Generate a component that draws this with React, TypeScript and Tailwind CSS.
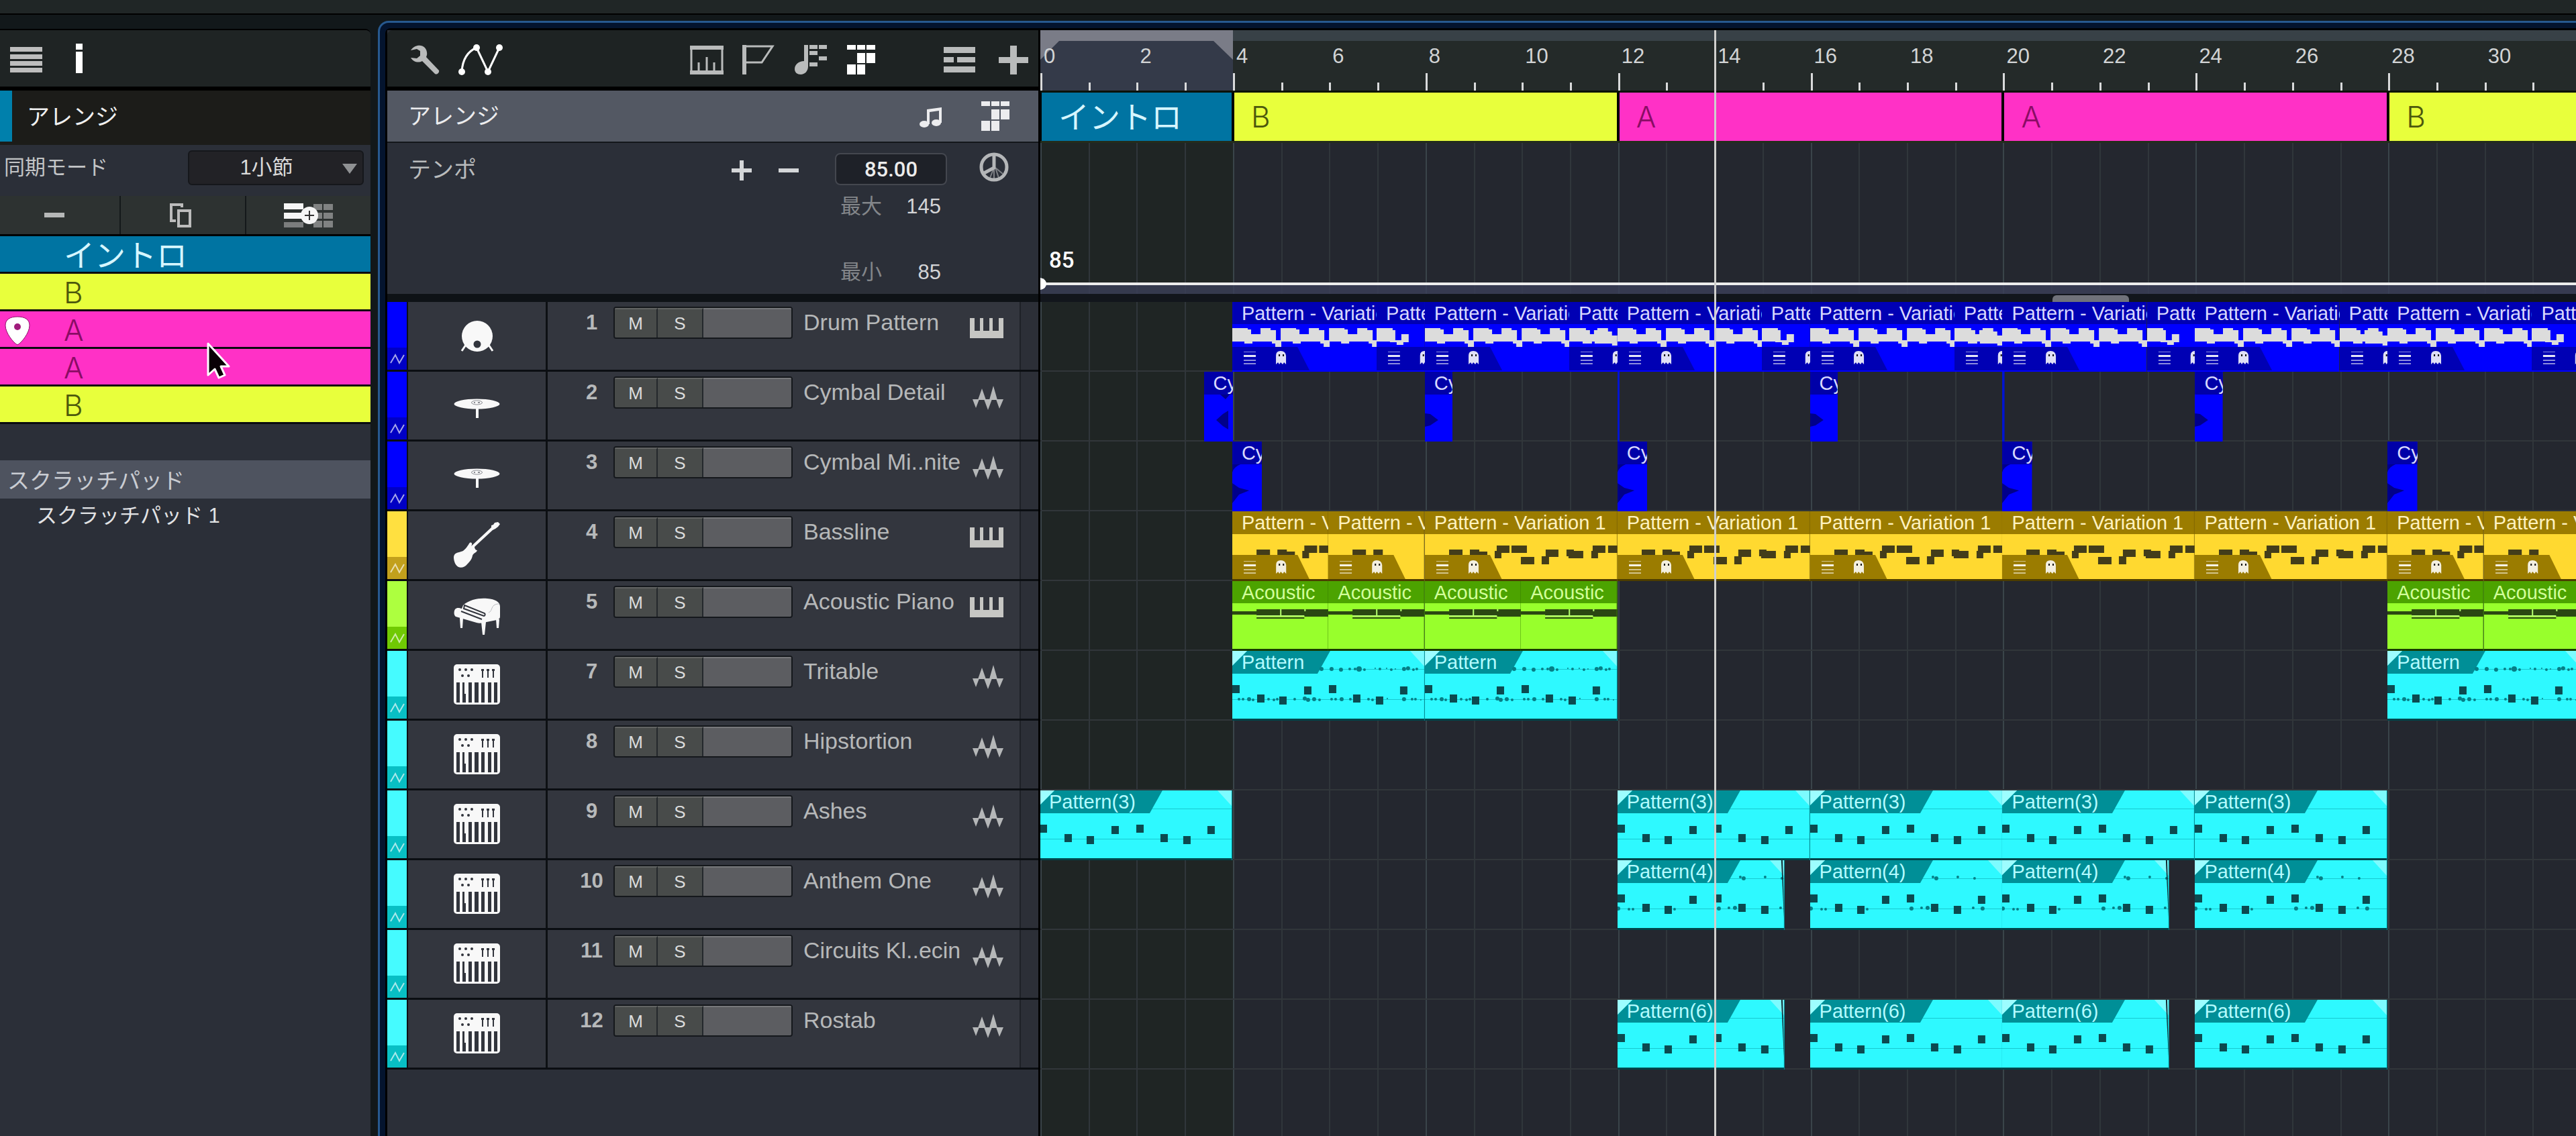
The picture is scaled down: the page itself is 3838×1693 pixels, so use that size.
import { useState } from "react"

type Kind = "keys" | "wave"
type Instrument = "drum" | "cymbal" | "guitar" | "piano" | "synth"
type ClipType = "drum" | "cymbalIn" | "cymbalOut" | "cymbalHit" | "marker" | "bass" | "piano" | "synth"

interface Clip {
  start: number
  length: number
  label?: string
  type: ClipType
  variant?: string
}

interface Track {
  id: number
  name: string
  kind: Kind
  instrument: Instrument
  strip: string
  stripDark: string
  clips: Clip[]
}

// number of bars that fit in the timeline
const VISIBLE_BARS = 31.9
const BAR_UNIT = 71.72
const bars = Array.from({ length: 32 }, (_, i) => i)

const pct = (bar: number) => `${(bar / VISIBLE_BARS) * 100}%`

const sections = [
  { start: 0, length: 4, label: "イントロ", color: "bg-[#0074a2] text-[#d6f6ff]" },
  { start: 4, length: 8, label: "B", color: "bg-[#e8ff3c] text-[#4c580c]" },
  { start: 12, length: 8, label: "A", color: "bg-[#ff31c6] text-[#8a0c65]" },
  { start: 20, length: 8, label: "A", color: "bg-[#ff31c6] text-[#8a0c65]" },
  { start: 28, length: 8, label: "B", color: "bg-[#e8ff3c] text-[#4c580c]" },
]

const drumClips: Clip[] = [4, 8, 12, 16, 20, 24, 28].flatMap((start, i) => [
  { start, length: 3, label: "Pattern - Variation 1", type: "drum" as const, variant: "long" },
  { start: start + 3, length: 1, label: "Pattern - Variation 2", type: "drum" as const, variant: i % 2 ? "full" : "short" },
])

const bassClips: Clip[] = [
  { start: 4, length: 2, label: "Pattern - Variation 1", type: "bass" },
  { start: 6, length: 2, label: "Pattern - Variation 1", type: "bass", variant: "short" },
  ...[8, 12, 16, 20, 24].map((start) => ({ start, length: 4, label: "Pattern - Variation 1", type: "bass" as const })),
  { start: 28, length: 2, label: "Pattern - Variation 1", type: "bass" },
  { start: 30, length: 2, label: "Pattern - Variation 1", type: "bass", variant: "short" },
]

const pianoClips: Clip[] = [4, 6, 8, 10, 28, 30].map((start) => ({
  start,
  length: 2,
  label: "Acoustic",
  type: "piano",
}))

const shortPattern = (label: string, variant: string): Clip[] => [
  { start: 12, length: 3.47, label, type: "synth", variant },
  { start: 16, length: 4, label, type: "synth", variant },
  { start: 20, length: 3.47, label, type: "synth", variant },
  { start: 24, length: 4, label, type: "synth", variant },
]

const blue = { strip: "bg-[#0000ff]", stripDark: "bg-[#0000c4]" }
const cyan = { strip: "bg-[#45fbff]", stripDark: "bg-[#08bfc4]" }

const tracks: Track[] = [
  { id: 1, name: "Drum Pattern", kind: "keys", instrument: "drum", ...blue, clips: drumClips },
  {
    id: 2,
    name: "Cymbal Detail",
    kind: "wave",
    instrument: "cymbal",
    ...blue,
    clips: [
      { start: 3.41, length: 0.6, label: "Cymbal", type: "cymbalIn" },
      { start: 8, length: 0.58, label: "Cymbal", type: "cymbalOut" },
      { start: 12, length: 0.05, type: "marker" },
      { start: 16, length: 0.58, label: "Cymbal", type: "cymbalOut" },
      { start: 20, length: 0.05, type: "marker" },
      { start: 24, length: 0.58, label: "Cymbal", type: "cymbalOut" },
    ],
  },
  {
    id: 3,
    name: "Cymbal Mi..nite",
    kind: "wave",
    instrument: "cymbal",
    ...blue,
    clips: [4, 12, 20, 28].map((start) => ({ start, length: 0.62, label: "Cymbal", type: "cymbalHit" })),
  },
  { id: 4, name: "Bassline", kind: "keys", instrument: "guitar", strip: "bg-[#ffe040]", stripDark: "bg-[#c2a01c]", clips: bassClips },
  { id: 5, name: "Acoustic Piano", kind: "keys", instrument: "piano", strip: "bg-[#adff3f]", stripDark: "bg-[#70c903]", clips: pianoClips },
  {
    id: 7,
    name: "Tritable",
    kind: "wave",
    instrument: "synth",
    ...cyan,
    clips: [4, 8, 28].map((start) => ({ start, length: 4, label: "Pattern", type: "synth", variant: "busy" })),
  },
  { id: 8, name: "Hipstortion", kind: "wave", instrument: "synth", ...cyan, clips: [] },
  {
    id: 9,
    name: "Ashes",
    kind: "wave",
    instrument: "synth",
    ...cyan,
    clips: [0, 12, 16, 20, 24].map((start) => ({ start, length: 4, label: "Pattern(3)", type: "synth", variant: "plain" })),
  },
  { id: 10, name: "Anthem One", kind: "wave", instrument: "synth", ...cyan, clips: shortPattern("Pattern(4)", "light") },
  { id: 11, name: "Circuits Kl..ecin", kind: "wave", instrument: "synth", ...cyan, clips: [] },
  { id: 12, name: "Rostab", kind: "wave", instrument: "synth", ...cyan, clips: shortPattern("Pattern(6)", "plain") },
]

/* ---------- icons ---------- */

function GridIcon() {
  return (
    <svg width="42" height="44" viewBox="0 0 42 44" fill="currentColor" aria-hidden="true">
      <path d="M0 0h13v7H0zM15 0h12v7H15zM29 0h13v7H29zM15 12h12v15H15zM29 12h13v15H29zM0 29h13v15H0zM15 29h12v15H15z" />
    </svg>
  )
}

function InstrumentIcon({ name }: { name: Instrument }) {
  return (
    <svg width="69" height="69" viewBox="0 0 69 69" fill="#f8f8f8" aria-hidden="true">
      {name === "drum" && (
        <>
          <circle cx="35" cy="35" r="23" />
          <path d="M18 48l-6 9M52 48l6 9" stroke="#f8f8f8" strokeWidth="3" />
          <circle cx="35" cy="47" r="5.5" fill="#32353d" />
        </>
      )}
      {name === "cymbal" && (
        <>
          <ellipse cx="34.500" cy="32" rx="34" ry="7.500" />
          <ellipse cx="34.500" cy="30" rx="8" ry="3" fill="none" stroke="#8a8c92" />
          <path d="M30 30h2M36 30h3" stroke="#8a8c92" strokeWidth="2" />
          <path d="M33 38h4v15h-4z" />
        </>
      )}
      {name === "guitar" && (
        <path d="M61 1l5-1 3 3-3 4-4 3-4 2-27 25c0 3 2 5 4 5-1 4-6 4-7 8-1 5-3 8-8 13-3 4-9 6-13 4C3 65 0 59 0 52c1-6 5-6 11-8 5-1 9-7 12-12 2-3 5-1 4 2l-1 2L56 8l0-3 3-1z" />
      )}
      {name === "piano" && (
        <>
          <path d="M14 20C24 11 38 9 50 10c12 1 19 5 19 12v15c0 3-2 4-5 5L44 46c-4 1-7 1-10 0L3 37c-3-2-3-8-1-11 3-3 6-2 10-1z" />
          <path d="M16 20l30 12c1 1 1 4-1 4L15 25zM11 29l31 12" stroke="#32353d" strokeWidth="2" />
          <path d="M52 31c5-2 4-8 8-11 3-2 6-2 8-2" fill="none" stroke="#b9bbc0" strokeWidth="1" />
          <path d="M9 39h5l-1 15h-3zM63 41h5l-1 13h-3zM41 45h7l-2 19h-3z" />
        </>
      )}
      {name === "synth" && (
        <>
          <rect x="0" y="4" width="69" height="60" rx="5" />
          <g fill="#32353d">
            <circle cx="9" cy="12" r="2" />
            <circle cx="18" cy="12" r="2" />
            <circle cx="27" cy="12" r="2" />
            <circle cx="13" cy="21" r="2" />
            <circle cx="22" cy="21" r="2" />
            <path d="M41 11h4v3h-1v10h-2V14h-1zM49 11h4v3h-1v10h-2V14h-1zM57 11h4v3h-1v10h-2V14h-1z" />
            <path d="M4 31h5v30H4zM13 31h3v17h2v13h-5zM22 31h5v30h-5zM31 31h6v30h-6zM41 31h5v30h-5zM51 31h5v30h-5zM60 31h5v30h-5z" />
          </g>
          <path d="M10 31v30M39 31v16M49 31v18" stroke="#f8f8f8" strokeWidth="1" />
        </>
      )}
    </svg>
  )
}

function KindIcon({ kind }: { kind: Kind }) {
  if (kind === "keys") {
    return (
      <svg width="50" height="30" viewBox="0 0 50 30" fill="#c6c6c3" aria-hidden="true">
        <path d="M0 0h7v19h8V0h5v19h9V0h5v19h9V0h7v30H0z" />
      </svg>
    )
  }
  return (
    <svg className="ml-1" width="46" height="37" viewBox="0 0 46 37" fill="#b5b7b8" aria-hidden="true">
      <path d="M8 21L14 4l6 17zM25 21L31 0l6 21zM0 20h10l-5 13zM17 20h12l-6 16zM35 20h11l-6 14z" />
    </svg>
  )
}

/* ---------- clips ---------- */

const bassNotes = [
  [36, 57, 20, 9], [67, 57, 14, 9], [80, 60, 13, 6], [107, 51, 19, 11], [104, 59, 10, 11], [129, 51, 23, 11],
  [143, 68, 20, 11], [180, 57, 19, 11], [174, 67, 11, 12], [211, 57, 11, 10], [214, 59, 22, 11], [250, 51, 19, 11],
  [248, 59, 10, 11], [273, 51, 14, 11],
]

const synthNotes = [
  [0, 51], [37, 65], [70, 68], [107, 53], [144, 51], [180, 65], [214, 68], [250, 53],
]

const busyDots = [
  [10, 72, 2], [16, 72, 2], [25, 72, 3], [31, 73, 2], [54, 72, 2], [62, 73, 2], [67, 72, 2], [93, 72, 2], [108, 71, 3],
  [113, 73, 3], [122, 72, 3], [130, 73, 2], [148, 72, 2], [154, 72, 2], [163, 72, 3], [176, 72, 2], [203, 72, 2],
  [209, 73, 2], [231, 71, 1], [256, 72, 3], [268, 72, 2], [273, 72, 2], [281, 73, 1],
  [133, 27, 3], [148, 27, 3], [162, 28, 3], [175, 27, 2], [183, 27, 2], [189, 27, 4], [197, 28, 2], [213, 26, 1],
  [220, 27, 2], [230, 26, 1], [237, 28, 2], [243, 27, 1], [256, 27, 3], [262, 26, 3], [270, 28, 2], [275, 27, 2],
]

const lightDots = [
  [1, 72, 3], [17, 73, 2], [23, 73, 2], [85, 73, 2], [151, 72, 3], [166, 71, 2], [175, 71, 3], [243, 71, 2], [257, 72, 3],
  [183, 25, 2], [188, 27, 3], [220, 25, 2], [245, 27, 2],
]

function BadgeIcons() {
  return (
    <>
      <path d="M17 74h18v1H17zM17 86h18v2H17zM17 91h18v2H17z" fill="#fff" opacity="0.55" />
      <path d="M17 79h18v3H17z" fill="#fff" opacity="0.9" />
      <path d="M65 93V80q0-7 7-7t8 7v13l-3-3-2 3-3-3-2 3-2-3z" fill="#fff" opacity="0.88" />
      <path d="M69 78h2v3h-2zM75 78h2v3h-2z" fill="#111" />
    </>
  )
}

function ClipArt({ clip }: { clip: Clip }) {
  const w = Math.round(clip.length * BAR_UNIT)
  const isShort = clip.length > 3 && clip.length < 4
  const tab = clip.variant === "busy" ? 146 : 183

  return (
    <svg className="block size-full" viewBox={`0 0 ${w} 104`} preserveAspectRatio="none" aria-hidden="true">
      {clip.type === "drum" && (
        <>
          <path d={`M0 0h${w}v104H0z`} fill="#0000ff" />
          <path d={`M0 0h${w}v33H0zM0 67h97l18 35H0z`} fill="#0000b4" />
          {clip.variant === "long" &&
            [0, 1, 2].map((i) => (
              <path
                key={i}
                transform={`translate(${i * 72} 0)`}
                d="M0 39H23V41H28V48H42V39H57V42H65V57H73V67H64V62H59V59H30V62H18V59H0z"
                fill="#dcdcdc"
              />
            ))}
          {clip.variant === "short" && <path d="M0 39H24V42H28V57H37V48H48V60H40V64H30V60H20V59H0z" fill="#dcdcdc" />}
          {clip.variant === "full" && <path d="M0 39H25V42H31V48H37V42H42V39H58V44H64V50H72V65H64V62H38V59H34V62H20V59H0z" fill="#dcdcdc" />}
          <BadgeIcons />
        </>
      )}
      {clip.type === "bass" && (
        <>
          <path d={`M0 0h${w}v104H0z`} fill="#ffd930" />
          <path d={`M0 0h${w}v34H0z`} fill="#9b7c00" />
          {bassNotes
            .filter((n) => n[0] < (clip.variant === "short" ? 76 : w))
            .map((n, i) => (
              <rect key={i} x={n[0]} y={n[1]} width={n[2]} height={n[3]} fill="#433d1a" />
            ))}
          <path d="M0 65h97l18 37H0z" fill="#9b7c00" />
          <BadgeIcons />
          <path d={`M0 101h${w}v3H0z`} fill="#4d3d00" />
          <path d={`M${w - 1} 0h1v104h-1z`} fill="#6b5700" opacity="0.6" />
        </>
      )}
      {clip.type === "piano" && (
        <>
          <path d={`M0 0h${w}v104H0z`} fill="#98ff2c" />
          <path d={`M0 0h${w}v33H0z`} fill="#4ca300" />
          <path d={`M0 45h36v-3h${w - 36}v11H107v3H36v-2h71v-2H36v-2H0z`} fill="#2b4812" />
          <path d="M36 51h71v2H36zM71 42h2v9h-2zM107 42h2v3h-2z" fill="#b6ff70" />
          <path d={`M0 101h${w}v3H0z`} fill="#173c00" />
          <path d={`M${w - 1} 0h1v104h-1z`} fill="#2f7000" opacity="0.7" />
        </>
      )}
      {clip.type === "synth" && (
        <>
          <path d={`M0 0h${w}v104H0z`} fill="#2ef9ff" />
          <path d={`M0 27h${w}v1H0zM0 72h${w}v1H0z`} fill="#0aa8b0" opacity="0.6" />
          <path d={`M22 0H${tab}l-19 34H0V22z`} fill="#008f97" />
          <path d="M0 0h22L0 22z" fill="#9dfdff" />
          <path d={`M${w - 22} 0H${w}v24z`} fill="#7dfbff" />
          {(clip.variant === "busy" ? busyDots : clip.variant === "light" ? lightDots : [])
            .filter((d) => d[0] < w)
            .map((d, i) => (
              <circle key={i} cx={d[0]} cy={d[1]} r={d[2]} fill="#067e86" />
            ))}
          {synthNotes
            .filter((n) => n[0] < w)
            .map((n, i) => (
              <rect key={i} x={n[0]} y={n[1]} width="11" height="12" fill="#0c4a50" />
            ))}
          {isShort && <path d={`M${w - 5} 0h2L${w} 101V104z`} fill="#10242a" />}
          <path d={`M0 101h${w}v3H0z`} fill="#00454b" />
          <path d={`M${w - 1} 0h1v104h-1z`} fill="#00838b" />
        </>
      )}
      {clip.type === "marker" && <path d={`M0 0h${w}v104H0z`} fill="#0014d2" />}
      {clip.type.startsWith("cymbal") && (
        <>
          <path d={`M0 0h${w}v104H0z`} fill="#0000ff" />
          <path d={`M0 0h${w}v34H0z`} fill="#0000a8" />
          {clip.type === "cymbalIn" && <path d="M36 58v28l-8-5-10-9 10-9zM24 34h14l-6 7z" fill="#00008a" />}
          {clip.type === "cymbalOut" && <path d="M0 62l8 1 12 9-12 8-8 2z" fill="#00008a" />}
          {clip.type === "cymbalHit" && <path d="M0 34h12Q2 38 0 46zM0 62l10 7 15 4-15 6L0 92z" fill="#00008a" />}
        </>
      )}
    </svg>
  )
}

function ClipBox({ clip }: { clip: Clip }) {
  const labelColor =
    clip.type === "bass" ? "text-[#fff2c0]" : clip.type === "piano" ? "text-[#d2ff9a]" : clip.type === "synth" ? "text-[#b4fbff]" : "text-[#d8d8ff]"
  return (
    <div
      className="absolute inset-y-0 -ml-px overflow-hidden"
      style={{ left: pct(clip.start), width: pct(clip.length) }}
    >
      <ClipArt clip={clip} />
      {clip.label && (
        <span className={`absolute top-0 right-0 left-[14px] overflow-hidden text-[29px] leading-[34px] whitespace-nowrap ${labelColor}`}>
          {clip.label}
        </span>
      )}
    </div>
  )
}

/* ---------- left inspector ---------- */

function Inspector() {
  const [mode, setMode] = useState("1小節")

  return (
    <aside className="relative mt-[21px] w-[552px] shrink-0 rounded-tr-lg border-t-2 border-black bg-[#2b2f38]">
      <div className="flex h-[90px] items-center gap-[50px] rounded-tr-lg border-b-6 border-black bg-[#1f2424] pl-[15px]">
        <button type="button" aria-label="Menu" className="pt-1">
          <svg width="48" height="40" viewBox="0 0 48 40" fill="#bdbdbd">
            <path d="M0 1h48v7H0zM0 12h48v7H0zM0 22h48v7H0zM0 32h48v7H0z" />
          </svg>
        </button>
        <button type="button" aria-label="Info">
          <svg width="10" height="44" viewBox="0 0 10 44" fill="#fff">
            <path d="M0 0h10v9H0zM0 12h10v32H0z" />
          </svg>
        </button>
      </div>
      <div className="flex h-[81px] bg-[#1c1c19] pb-[5px]">
        <div className="w-[18px] bg-[#0080ac]" />
        <h2 className="pl-[22px] text-[34px] leading-[78px] text-[#f0f0f0]">アレンジ</h2>
      </div>
      <div className="flex h-[76px] items-center justify-between pr-[10px] pb-2 pl-[6px]">
        <label htmlFor="sync" className="text-[31px] text-[#c2c4c6]">
          同期モード
        </label>
        <div className="relative">
          <select
            id="sync"
            value={mode}
            onChange={(e) => setMode(e.target.value)}
            className="h-[52px] w-[262px] appearance-none rounded-md border-2 border-[#15171b] bg-[#222226] pr-7 text-center text-[31px] leading-[44px] text-[#dadada] [text-align-last:center]"
          >
            <option>1小節</option>
            <option>2小節</option>
          </select>
          <svg className="pointer-events-none absolute top-5 right-[10px]" width="22" height="15" viewBox="0 0 22 15" fill="#8f9193">
            <path d="M0 0h22L11 15z" />
          </svg>
        </div>
      </div>
      <div className="flex h-[60px] border-b-3 border-black bg-[#2d3231]">
        <button type="button" aria-label="Remove" className="flex w-[180px] items-center justify-center border-r-2 border-[#14181a] pr-4">
          <svg width="30" height="7" fill="#b6b8b8">
            <path d="M0 0h30v7H0z" />
          </svg>
        </button>
        <button type="button" aria-label="Duplicate" className="flex w-[187px] items-center justify-center border-r-2 border-[#14181a] pr-2">
          <svg width="32" height="36" viewBox="0 0 32 36" fill="none" stroke="#bcbcbc" strokeWidth="4">
            <path d="M18 6V2H2v24h7M13 11h17v23H13z" />
          </svg>
        </button>
        <button type="button" aria-label="Add section" className="flex flex-1 items-center justify-center">
          <svg width="74" height="38" viewBox="0 0 74 38">
            <path d="M0 1h29v9H0zM0 15h29v9H0z" fill="#f6f6f6" />
            <path d="M0 29h29v8H0z" fill="#7b7d7d" />
            <path d="M44 2h13v9H44zM59 2h14v9H59zM50 15h7v9h-7zM59 15h14v9H59zM44 27h13v10H44zM59 27h14v10H59z" fill="#808282" />
            <circle cx="38" cy="19" r="13" fill="#f6f6f6" />
            <path d="M38 12v14M31 19h14" stroke="#333" strokeWidth="2" />
          </svg>
        </button>
      </div>
      <ul>
        {sections.map((section, i) => (
          <li key={i}>
            <button
              type="button"
              className={`relative flex h-14 w-full items-center border-b-3 border-black/75 bg-clip-padding pt-0.5 pl-[95px] font-[Inter,'Noto_Sans_CJK_JP',sans-serif] leading-none ${
                i === 0 ? "text-[46px]" : "text-[44px] font-light"
              } ${section.color}`}
            >
              {i === 2 && (
                <svg className="absolute top-[7px] left-[7px]" width="38" height="44" viewBox="0 0 38 44">
                  <path d="M19 1C8 1 1 5 1 14c0 11 12 26 18 29 6-3 18-18 18-29C37 5 30 1 19 1z" fill="#fff" stroke="#8c1269" strokeWidth="1" />
                  <circle cx="19" cy="16" r="5" fill="#a01c7c" />
                </svg>
              )}
              {section.label}
            </button>
          </li>
        ))}
      </ul>
      <h3 className="mt-[54px] h-[57px] bg-[#4e535f] pl-[11px] text-[33px] leading-[62px] text-[#c9ccd2]">スクラッチパッド</h3>
      <a href="#scratch-1" className="block pl-[54px] text-[31px] leading-[52px] text-[#e2e3e5]">
        スクラッチパッド 1
      </a>
      <svg className="absolute top-[464px] left-[307px]" width="37" height="56" viewBox="0 0 37 56">
        <path d="M3 3v47l10-9 6 13 9-4-6-13h12z" fill="#0a0006" stroke="#fff" strokeWidth="3" strokeLinejoin="round" />
      </svg>
    </aside>
  )
}

/* ---------- track list column ---------- */

function TrackRow({ track }: { track: Track }) {
  const [muted, setMuted] = useState(false)
  const [solo, setSolo] = useState(false)

  return (
    <li className="flex h-[104px] border-b-3 border-[#0b0e12] bg-[#33363e]">
      <div className={`flex w-[29px] flex-col justify-end ${track.strip}`}>
        <div className={`flex h-[33px] items-center justify-center ${track.stripDark}`}>
          <svg width="22" height="16" viewBox="0 0 22 16" fill="none" stroke="#fff" strokeOpacity="0.65" strokeWidth="2">
            <path d="M1 14L8 2l6 12 7-12" />
          </svg>
        </div>
      </div>
      <div className="flex w-[210px] items-center justify-center border-r-3 border-l-2 border-[#0d1014]">
        <InstrumentIcon name={track.instrument} />
      </div>
      <div className="flex flex-1 items-start border-r-2 border-[#1e2127]">
        <span className="w-[98px] shrink-0 pl-[33px] text-center text-[31px] leading-[62px] font-bold text-[#b7b9ba]">{track.id}</span>
        <div className="mt-[7px] flex h-12 w-[267px] shrink-0 overflow-hidden rounded-sm border-2 border-[#15181c] text-[26px] text-[#dcdddd]">
          <button
            type="button"
            aria-pressed={muted}
            onClick={() => setMuted(!muted)}
            className="w-16 border-t-2 border-r-2 border-[#626463] border-r-[#24282c] bg-[#484b4a]"
          >
            M
          </button>
          <button
            type="button"
            aria-pressed={solo}
            onClick={() => setSolo(!solo)}
            className="w-[68px] border-t-2 border-r-2 border-[#626463] border-r-[#24282c] bg-[#484b4a]"
          >
            S
          </button>
          <div className="flex-1 border-t-2 border-[#77787b] bg-[#5c5d61]" />
        </div>
        <span className="w-[264px] shrink-0 pl-4 text-[34px] leading-[61px] whitespace-nowrap text-[#b6b8b9]">{track.name}</span>
        <span className="flex h-[78px] flex-1 items-center">
          <KindIcon kind={track.kind} />
        </span>
      </div>
      <div className="w-[26px] bg-[#2c2f37]" />
    </li>
  )
}

function TrackColumn() {
  const [tempo, setTempo] = useState("85.00")

  return (
    <section className="w-[973px] shrink-0 border-r-3 border-black bg-[#2b2f38]">
      <div className="flex h-[90px] items-center rounded-tl-lg border-b-6 border-black bg-[#1e2323] pt-1 pr-[15px] pl-[34px] text-[#b9bbbb]">
        <button type="button" aria-label="Tools">
          <svg width="44" height="44" viewBox="0 0 44 44" fill="currentColor">
            <path d="M1 8C5 2 11 0 16 1c7 1 10 8 9 14l-1 3 19 20c1 3-3 7-6 5L18 24c-5 3-13 2-17-5l9 1 5-4V9l-5-3z" />
          </svg>
        </button>
        <button type="button" aria-label="Automation" className="ml-7 text-white">
          <svg width="68" height="46" viewBox="0 0 68 46" fill="currentColor">
            <path d="M5 41C6 24 13 11 27 5l17 36L61 5" fill="none" stroke="currentColor" strokeWidth="3" />
            <circle cx="5" cy="41" r="5" />
            <circle cx="27" cy="5" r="5" />
            <circle cx="44" cy="41" r="5" />
            <circle cx="61" cy="5" r="5" />
          </svg>
        </button>
        <div className="ml-auto flex items-center gap-7">
          <button type="button" aria-label="Ruler">
            <svg width="50" height="43" viewBox="0 0 50 43" fill="none" stroke="currentColor" strokeWidth="3">
              <path d="M2 3h46v37H2z" />
              <path d="M0 3h50M0 40h50" strokeWidth="6" />
              <path d="M13 38V25M25 38V17M36 38V25" />
            </svg>
          </button>
          <button type="button" aria-label="Markers">
            <svg width="50" height="44" viewBox="0 0 50 44" fill="none" stroke="currentColor">
              <path d="M3 44V0" strokeWidth="6" />
              <path d="M3 2h42L29 26H3" strokeWidth="3" />
            </svg>
          </button>
          <button type="button" aria-label="Chords">
            <svg width="50" height="44" viewBox="0 0 50 44" fill="currentColor">
              <path d="M14 0h6v32c0 7-5 12-11 12-5 0-9-3-9-8 0-7 6-12 14-12zM22 0h12v6H22zM36 0h12v6H36zM22 9h12v6H22zM36 17h12v6H36zM22 26h12v6H22z" />
            </svg>
          </button>
          <button type="button" aria-label="Arranger" className="text-white">
            <GridIcon />
          </button>
        </div>
        <button type="button" aria-label="Track list" className="ml-[102px]">
          <svg width="47" height="38" viewBox="0 0 47 38" fill="currentColor">
            <path d="M0 0h47v9H0zM0 15h15v8H0zM20 15h27v8H20zM0 29h47v9H0z" />
          </svg>
        </button>
        <button type="button" aria-label="Add track" className="ml-[35px]">
          <svg width="44" height="43" viewBox="0 0 44 43" fill="currentColor">
            <path d="M17 0h10v17h17v9H27v17H17V26H0v-9h17z" />
          </svg>
        </button>
      </div>

      <div className="flex h-[78px] items-center border-b-2 border-[#14171b] bg-[#535863] pr-[43px] pl-[31px] text-[#ececee]">
        <h2 className="flex-1 text-[34px]">アレンジ</h2>
        <svg className="mt-1" width="34" height="30" viewBox="0 0 34 30" fill="currentColor" aria-hidden="true">
          <ellipse cx="7" cy="25" rx="7" ry="5" />
          <ellipse cx="25" cy="23" rx="7" ry="5" />
          <path d="M11 3l22-3v23h-4V5L15 7v18h-4z" />
        </svg>
        <button type="button" aria-label="Arranger view" className="ml-[58px]">
          <GridIcon />
        </button>
      </div>

      <div className="flex h-[225px] justify-between pr-[44px] pl-[31px] text-[31px]">
        <h2 className="text-[34px] leading-[80px] text-[#b9bbbc]">テンポ</h2>
        <div className="flex items-start">
          <button type="button" aria-label="Increase tempo" className="mt-[26px]">
            <svg width="30" height="30" fill="#d4d6d8">
              <path d="M12 0h6v12h12v6H18v12h-6V18H0v-6h12z" />
            </svg>
          </button>
          <button type="button" aria-label="Decrease tempo" className="mt-[26px] ml-10">
            <svg width="30" height="30" fill="#d4d6d8">
              <path d="M0 12h30v6H0z" />
            </svg>
          </button>
          <div className="ml-[54px] flex w-[167px] flex-col pt-[15px]">
            <input
              aria-label="テンポ"
              value={tempo}
              onChange={(e) => setTempo(e.target.value)}
              className="h-12 w-full rounded-lg border-2 border-[#44474f] bg-[#1e2128] text-center font-[Roboto,sans-serif] text-[31px] font-medium text-[#ececec]"
            />
            <p className="mt-[10px] flex justify-between pr-[9px] pl-2 leading-[44px]">
              <span className="text-[#83868a]">最大</span>
              <span className="text-[#d4d5d7]">145</span>
            </p>
            <p className="mt-[54px] flex justify-between pr-[9px] pl-2 leading-[44px]">
              <span className="text-[#83868a]">最小</span>
              <span className="text-[#d4d5d7]">85</span>
            </p>
          </div>
          <svg className="mt-[14px] ml-12" width="44" height="44" viewBox="0 0 44 44" fill="none" stroke="#b4b6b8" aria-hidden="true">
            <circle cx="22" cy="22" r="19" strokeWidth="5" />
            <path d="M22 5v18L7 31" strokeWidth="5" />
            <path d="M22 23l-6 15M22 23v17M24 23l5 15M24 23l11 9" strokeWidth="2" strokeOpacity="0.6" />
          </svg>
        </div>
      </div>
      <div className="h-3 bg-[#0e1216]" />
      <ul>
        {tracks.map((track) => (
          <TrackRow key={track.id} track={track} />
        ))}
      </ul>
    </section>
  )
}

/* ---------- timeline ---------- */

function GridLines() {
  return (
    <>
      <div className="absolute inset-y-0 left-0 bg-[#1f2524]" style={{ width: pct(4) }} />
      {bars.map((bar) => (
        <div
          key={bar}
          className={`absolute inset-y-0 w-0.5 ${bar % 4 === 0 ? "bg-[#3a444a]" : "bg-[#30363b]"}`}
          style={{ left: pct(bar) }}
        />
      ))}
    </>
  )
}

function Timeline() {
  return (
    <section className="relative flex min-w-0 flex-1 flex-col overflow-hidden bg-[#24272f]">
      <div className="relative h-[90px] bg-[#242a29]">
        <div className="h-4 bg-[#384147]" />
        <div className="absolute inset-y-0 left-0 bg-[#343a49]" style={{ width: pct(4) }}>
          <div className="flex h-4 bg-[#7a7c87]" />
          <svg className="absolute top-4 left-0" width="28" height="28" fill="#7a7c87">
            <path d="M0 0h28L0 28z" />
          </svg>
          <svg className="absolute top-4 right-0" width="29" height="28" fill="#7a7c87">
            <path d="M0 0h29v28z" />
          </svg>
        </div>
        {bars.map((bar) => (
          <div key={bar} className="absolute inset-y-0 flex items-end" style={{ left: pct(bar) }}>
            <div className={`w-[3px] bg-[#d9dadb] ${bar % 4 === 0 ? "h-[26px]" : "h-3"}`} />
            {bar % 2 === 0 && (
              <span className="absolute top-[22px] left-[5px] text-[31px] leading-[34px] text-[#d2d4d5]">{bar}</span>
            )}
          </div>
        ))}
      </div>

      <div className="relative h-[78px] border-b-3 border-[#232c1c] bg-[#0b1208]">
        {sections.map((section, i) => (
          <button
            key={i}
            type="button"
            className={`absolute top-[3px] bottom-0 border-x-2 border-black/80 bg-clip-padding pl-[25px] text-left font-[Inter,'Noto_Sans_CJK_JP',sans-serif] leading-none ${
              i === 0 ? "text-[46px]" : "text-[44px] font-light"
            } ${section.color}`}
            style={{ left: pct(section.start), width: pct(section.length) }}
          >
            {section.label}
          </button>
        ))}
      </div>

      <div className="relative h-[225px]">
        <GridLines />
        <div className="absolute inset-x-0 bottom-0 h-[17px] border-t-4 border-[#ececec] bg-[#3b4059]/80" />
        <svg className="absolute bottom-[6px] left-0" width="9" height="18" fill="#fff">
          <path d="M0 0q9 2 9 9t-9 9z" />
        </svg>
        <span className="absolute bottom-[33px] left-[13px] font-[Roboto,sans-serif] text-[33px] leading-[34px] font-medium text-white">85</span>
      </div>

      <div className="flex h-3 bg-[#12161c] pl-[65.9%]">
        <div className="mt-0.5 h-2.5 w-[114px] rounded-t-md bg-[#70727a]" />
      </div>

      <div className="relative flex-1">
        <GridLines />
        {tracks.map((track) => (
          <div key={track.id} className="relative h-[104px] border-b-2 border-[#31363a]">
            <div className="absolute inset-x-0 top-0 -bottom-0.5">
              {track.clips.map((clip, i) => (
                <ClipBox key={i} clip={clip} />
              ))}
            </div>
          </div>
        ))}
      </div>

      <div className="absolute inset-y-0 w-[3px] bg-[#cfcfcd]" style={{ left: pct(14) }} />
    </section>
  )
}

export default function App() {
  return (
    <div className="flex min-h-screen flex-col bg-[#12181a] font-['Liberation_Sans','Noto_Sans_CJK_JP',sans-serif]">
      <header className="h-[22px] border-b-2 border-black bg-[#202626]" />
      <main className="flex flex-1 gap-[11px]">
        <Inspector />
        <div className="mt-[9px] flex min-w-0 flex-1 rounded-tl-2xl border-t-3 border-l-3 border-[#27598f] bg-[#04142e] pt-2 pl-2">
          <div className="flex min-w-0 flex-1 rounded-tl-lg border-t-3 border-l-3 border-black">
            <TrackColumn />
            <Timeline />
          </div>
        </div>
      </main>
    </div>
  )
}
